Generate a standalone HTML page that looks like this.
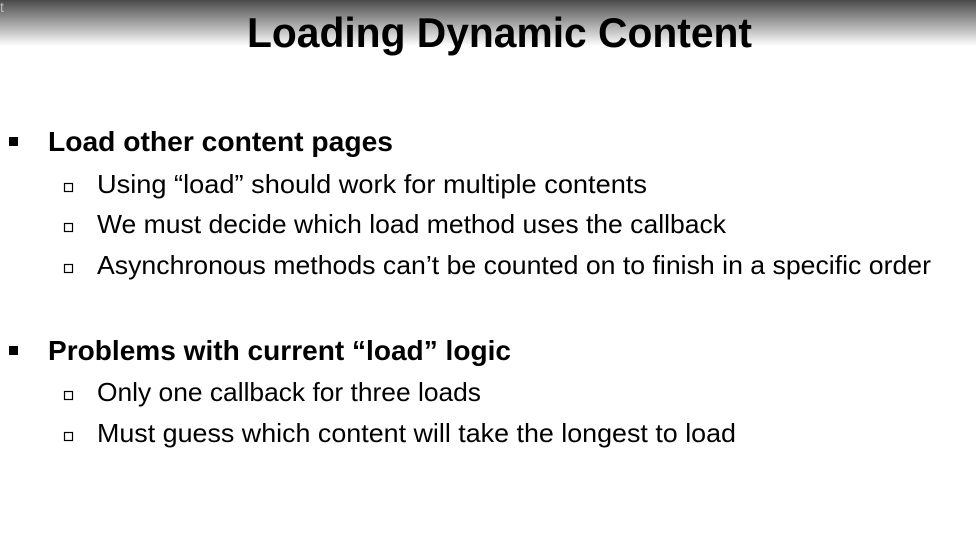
<!DOCTYPE html>
<html><head><meta charset="utf-8"><style>
html,body{margin:0;padding:0;width:976px;height:535px;overflow:hidden;background:#fff}
svg{display:block}
text{font-family:"Liberation Sans",sans-serif;fill:#000}
</style></head><body>
<svg width="976" height="535" xmlns="http://www.w3.org/2000/svg">
<defs><linearGradient id="g" x1="0" y1="0" x2="0" y2="1">
<stop offset="0" stop-color="#4a4a4a"/><stop offset="0.45" stop-color="#9a9a9a"/><stop offset="1" stop-color="#fff"/></linearGradient></defs>
<rect x="0" y="0" width="976" height="46" fill="url(#g)"/>
<text x="0" y="12" font-size="14" style="fill:#bbb">t</text>
<text x="247" y="47" font-size="42" font-weight="bold" textLength="505" lengthAdjust="spacingAndGlyphs">Loading Dynamic Content</text>
<rect x="9" y="137" width="9" height="9" fill="#000"/>
<text x="48" y="151" font-size="28" font-weight="bold" textLength="345" lengthAdjust="spacingAndGlyphs">Load other content pages</text>
<g fill="none" stroke="#000" stroke-width="1.2">
<rect x="64.5" y="183.5" width="8" height="8"/>
<rect x="64.5" y="223.5" width="8" height="8"/>
<rect x="64.5" y="264.5" width="8" height="8"/>
<rect x="64.5" y="391.5" width="8" height="8"/>
<rect x="64.5" y="432.5" width="8" height="8"/>
</g>
<text x="97" y="193" font-size="26" textLength="550" lengthAdjust="spacingAndGlyphs">Using “load” should work for multiple contents</text>
<text x="97" y="233" font-size="26" textLength="629" lengthAdjust="spacingAndGlyphs">We must decide which load method uses the callback</text>
<text x="97" y="274" font-size="26" textLength="834" lengthAdjust="spacingAndGlyphs">Asynchronous methods can’t be counted on to finish in a specific order</text>
<rect x="9" y="346" width="9" height="9" fill="#000"/>
<text x="48" y="360" font-size="28" font-weight="bold" textLength="463" lengthAdjust="spacingAndGlyphs">Problems with current “load” logic</text>
<text x="97" y="401" font-size="26" textLength="384" lengthAdjust="spacingAndGlyphs">Only one callback for three loads</text>
<text x="97" y="442" font-size="26" textLength="639" lengthAdjust="spacingAndGlyphs">Must guess which content will take the longest to load</text>
</svg>
</body></html>
